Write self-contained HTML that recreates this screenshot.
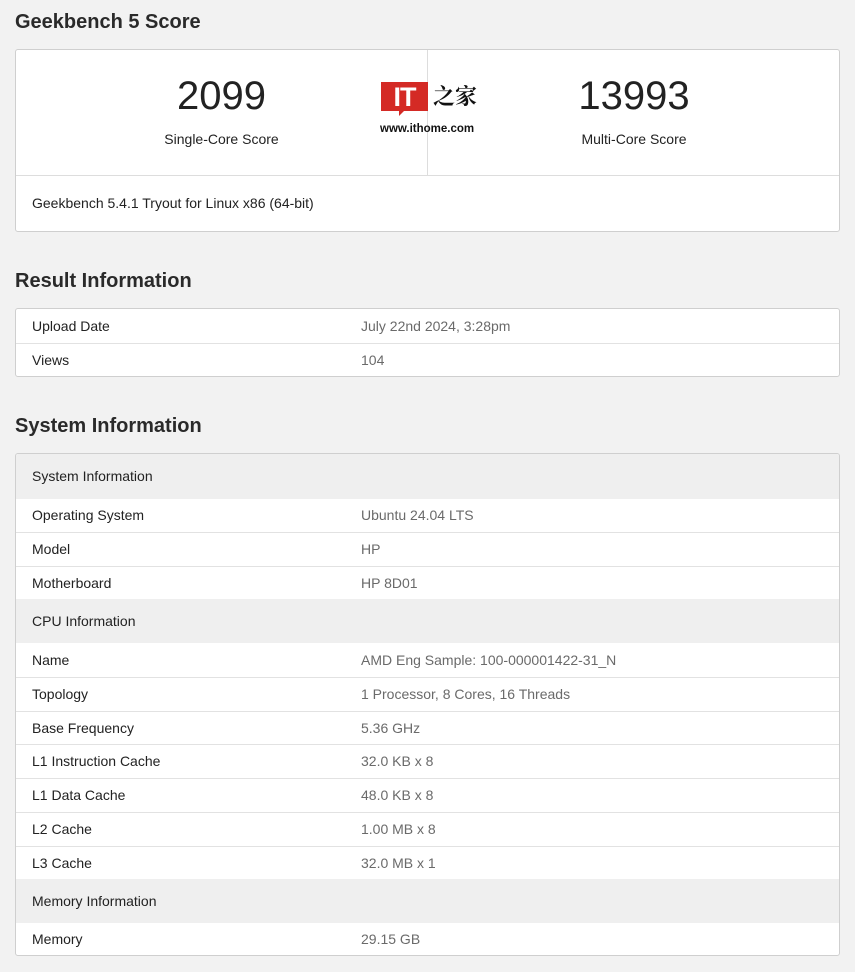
<!DOCTYPE html>
<html><head><meta charset="utf-8"><style>
*{box-sizing:border-box;margin:0;padding:0}
body{width:855px;height:972px;background:#f2f2f2;font-family:"Liberation Sans",Arial,sans-serif;color:#222;font-size:14px;position:relative;overflow:hidden}
h2{position:absolute;left:15px;font-size:20px;font-weight:bold;color:#2a2a2a}
.card{position:absolute;left:15px;width:825px;background:#fff;border:1px solid #cfcfcf;border-radius:3px;overflow:hidden}
.row{display:flex;align-items:center;border-top:1px solid #e2e2e2;padding-left:16px;padding-bottom:1px}
.row:first-child{border-top:none}
.row .k{width:329px}
.row .v{color:#6a6a6a}
.hd{background:#efefef;border-top:none}
.hd+.row{border-top:none}
</style></head><body>
<h2 style="top:11px">Geekbench 5 Score</h2>
<div class="card" style="top:49px;height:183px">
 <div style="position:absolute;left:411px;top:0;width:1px;height:125px;background:#ddd"></div>
 <div style="position:absolute;left:0;width:411px;top:24px;text-align:center;font-size:40px;color:#222">2099</div>
 <div style="position:absolute;left:0;width:411px;top:81px;text-align:center;font-size:14px">Single-Core Score</div>
 <div style="position:absolute;left:412px;width:412px;top:24px;text-align:center;font-size:40px;color:#222">13993</div>
 <div style="position:absolute;left:412px;width:412px;top:81px;text-align:center;font-size:14px">Multi-Core Score</div>
 <div style="position:absolute;left:365px;top:32px;width:47px;height:29px;background:#d42a25;color:#fff;font-weight:bold;font-size:27px;line-height:30px;text-align:center;letter-spacing:-1px">IT</div>
 <div style="position:absolute;left:383px;top:60px;width:0;height:0;border-left:6px solid #d42a25;border-bottom:6px solid transparent"></div>
 <div style="position:absolute;left:417px;top:32px;font-size:22px;font-family:'Noto Serif CJK SC',serif;font-weight:bold;color:#111;line-height:28px">之家</div>
 <div style="position:absolute;left:364px;top:73px;font-size:11.5px;font-weight:bold;color:#111">www.ithome.com</div>
 <div style="position:absolute;left:0;right:0;top:125px;border-top:1px solid #ddd;height:57px;padding-left:16px;line-height:55px">Geekbench 5.4.1 Tryout for Linux x86 (64-bit)</div>
</div>
<h2 style="top:270px">Result Information</h2>
<div class="card" style="top:308px;height:69px">
 <div class="row" style="height:34px"><div class="k">Upload Date</div><div class="v">July 22nd 2024, 3:28pm</div></div>
 <div class="row" style="height:34px"><div class="k">Views</div><div class="v">104</div></div>
</div>
<h2 style="top:415px">System Information</h2>
<div class="card" style="top:453px;height:503px">
 <div class="row hd" style="height:45px"><div class="k">System Information</div></div>
 <div class="row" style="height:33px"><div class="k">Operating System</div><div class="v">Ubuntu 24.04 LTS</div></div>
 <div class="row" style="height:34px"><div class="k">Model</div><div class="v">HP</div></div>
 <div class="row" style="height:33px"><div class="k">Motherboard</div><div class="v">HP 8D01</div></div>
 <div class="row hd" style="height:44px"><div class="k">CPU Information</div></div>
 <div class="row" style="height:34px"><div class="k">Name</div><div class="v">AMD Eng Sample: 100-000001422-31_N</div></div>
 <div class="row" style="height:34px"><div class="k">Topology</div><div class="v">1 Processor, 8 Cores, 16 Threads</div></div>
 <div class="row" style="height:33px"><div class="k">Base Frequency</div><div class="v">5.36 GHz</div></div>
 <div class="row" style="height:34px"><div class="k">L1 Instruction Cache</div><div class="v">32.0 KB x 8</div></div>
 <div class="row" style="height:34px"><div class="k">L1 Data Cache</div><div class="v">48.0 KB x 8</div></div>
 <div class="row" style="height:34px"><div class="k">L2 Cache</div><div class="v">1.00 MB x 8</div></div>
 <div class="row" style="height:33px"><div class="k">L3 Cache</div><div class="v">32.0 MB x 1</div></div>
 <div class="row hd" style="height:44px"><div class="k">Memory Information</div></div>
 <div class="row" style="height:33px"><div class="k">Memory</div><div class="v">29.15 GB</div></div>
</div>
</body></html>
